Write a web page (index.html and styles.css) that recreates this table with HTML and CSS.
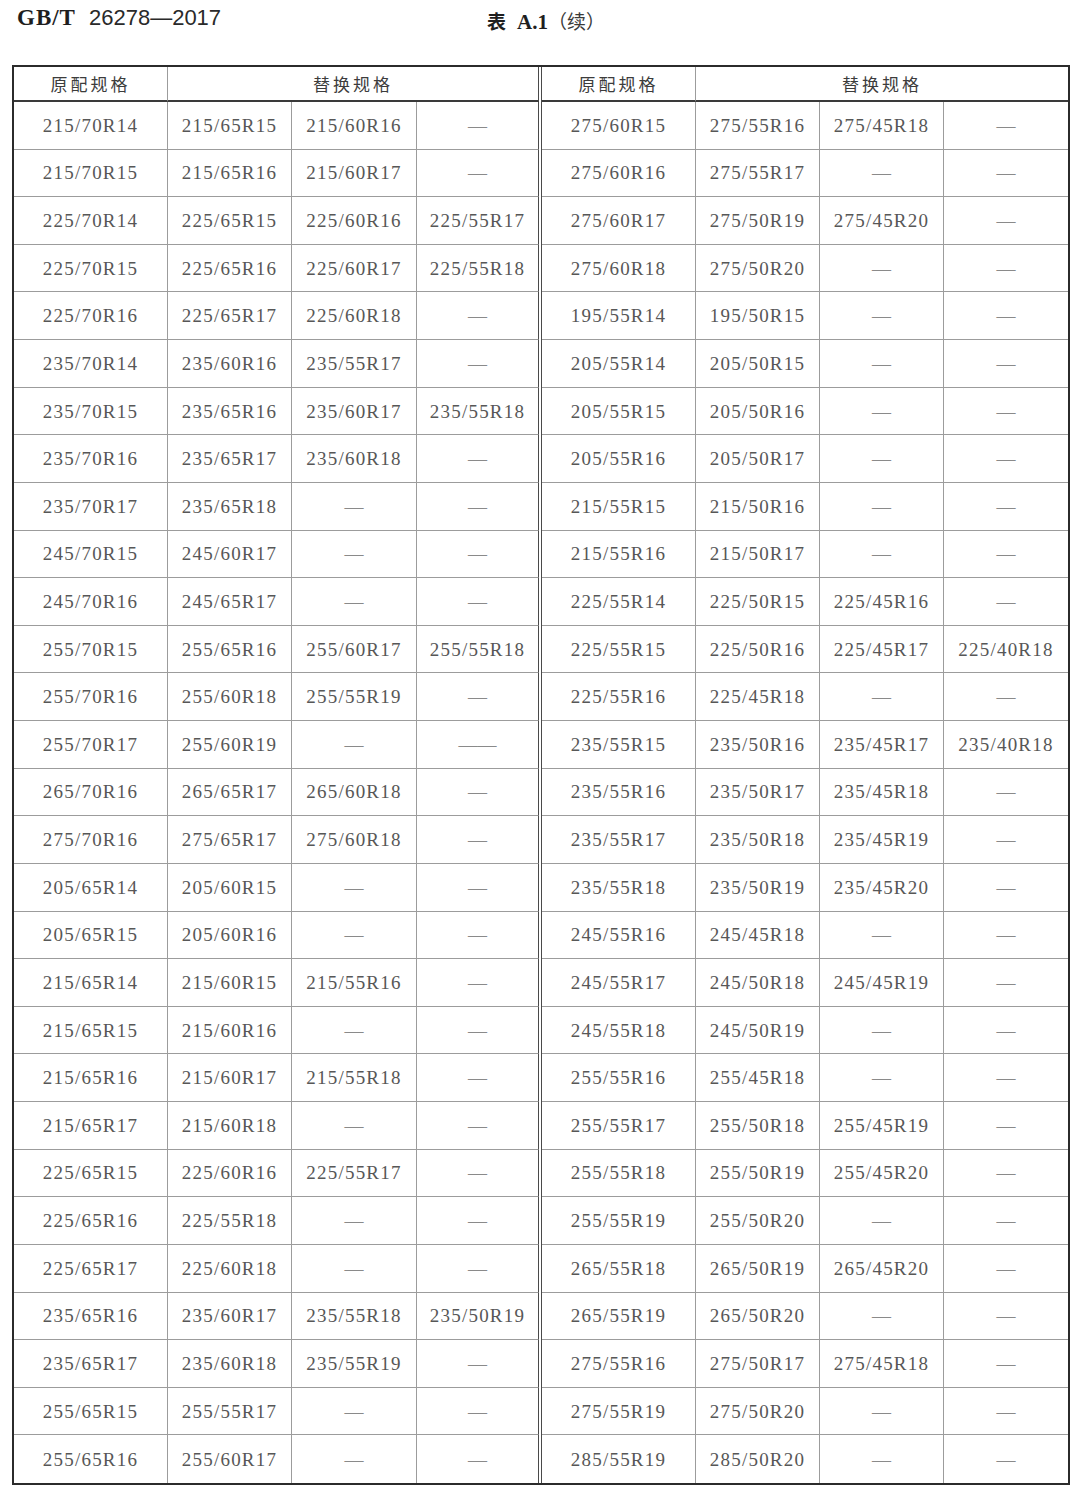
FILE: index.html
```html
<!DOCTYPE html>
<html lang="zh-CN">
<head>
<meta charset="utf-8">
<title>GB/T 26278—2017 表 A.1（续）</title>
<link rel="stylesheet" href="styles.css">
</head>
<body>
<div class="page">
  <header class="top">
    <div class="std"><span class="std-code">GB/T</span><span class="std-num">26278—2017</span></div>
    <div class="caption"><span class="cap-zh">表</span><span class="cap-no">A.1</span><span class="cap-cont">（续）</span></div>
    <div></div>
  </header>

  <div class="sheet">
    <div class="half half-left">
      <div class="hd">原配规格</div><div class="hd span3">替换规格</div>
      <div class="c">215/70R14</div><div class="c">215/65R15</div><div class="c">215/60R16</div><div class="c d">—</div>
      <div class="c">215/70R15</div><div class="c">215/65R16</div><div class="c">215/60R17</div><div class="c d">—</div>
      <div class="c">225/70R14</div><div class="c">225/65R15</div><div class="c">225/60R16</div><div class="c">225/55R17</div>
      <div class="c">225/70R15</div><div class="c">225/65R16</div><div class="c">225/60R17</div><div class="c">225/55R18</div>
      <div class="c">225/70R16</div><div class="c">225/65R17</div><div class="c">225/60R18</div><div class="c d">—</div>
      <div class="c">235/70R14</div><div class="c">235/60R16</div><div class="c">235/55R17</div><div class="c d">—</div>
      <div class="c">235/70R15</div><div class="c">235/65R16</div><div class="c">235/60R17</div><div class="c">235/55R18</div>
      <div class="c">235/70R16</div><div class="c">235/65R17</div><div class="c">235/60R18</div><div class="c d">—</div>
      <div class="c">235/70R17</div><div class="c">235/65R18</div><div class="c d">—</div><div class="c d">—</div>
      <div class="c">245/70R15</div><div class="c">245/60R17</div><div class="c d">—</div><div class="c d">—</div>
      <div class="c">245/70R16</div><div class="c">245/65R17</div><div class="c d">—</div><div class="c d">—</div>
      <div class="c">255/70R15</div><div class="c">255/65R16</div><div class="c">255/60R17</div><div class="c">255/55R18</div>
      <div class="c">255/70R16</div><div class="c">255/60R18</div><div class="c">255/55R19</div><div class="c d">—</div>
      <div class="c">255/70R17</div><div class="c">255/60R19</div><div class="c d">—</div><div class="c d">——</div>
      <div class="c">265/70R16</div><div class="c">265/65R17</div><div class="c">265/60R18</div><div class="c d">—</div>
      <div class="c">275/70R16</div><div class="c">275/65R17</div><div class="c">275/60R18</div><div class="c d">—</div>
      <div class="c">205/65R14</div><div class="c">205/60R15</div><div class="c d">—</div><div class="c d">—</div>
      <div class="c">205/65R15</div><div class="c">205/60R16</div><div class="c d">—</div><div class="c d">—</div>
      <div class="c">215/65R14</div><div class="c">215/60R15</div><div class="c">215/55R16</div><div class="c d">—</div>
      <div class="c">215/65R15</div><div class="c">215/60R16</div><div class="c d">—</div><div class="c d">—</div>
      <div class="c">215/65R16</div><div class="c">215/60R17</div><div class="c">215/55R18</div><div class="c d">—</div>
      <div class="c">215/65R17</div><div class="c">215/60R18</div><div class="c d">—</div><div class="c d">—</div>
      <div class="c">225/65R15</div><div class="c">225/60R16</div><div class="c">225/55R17</div><div class="c d">—</div>
      <div class="c">225/65R16</div><div class="c">225/55R18</div><div class="c d">—</div><div class="c d">—</div>
      <div class="c">225/65R17</div><div class="c">225/60R18</div><div class="c d">—</div><div class="c d">—</div>
      <div class="c">235/65R16</div><div class="c">235/60R17</div><div class="c">235/55R18</div><div class="c">235/50R19</div>
      <div class="c">235/65R17</div><div class="c">235/60R18</div><div class="c">235/55R19</div><div class="c d">—</div>
      <div class="c">255/65R15</div><div class="c">255/55R17</div><div class="c d">—</div><div class="c d">—</div>
      <div class="c">255/65R16</div><div class="c">255/60R17</div><div class="c d">—</div><div class="c d">—</div>
    </div>

    <div class="half half-right">
      <div class="hd">原配规格</div><div class="hd span3">替换规格</div>
      <div class="c">275/60R15</div><div class="c">275/55R16</div><div class="c">275/45R18</div><div class="c d">—</div>
      <div class="c">275/60R16</div><div class="c">275/55R17</div><div class="c d">—</div><div class="c d">—</div>
      <div class="c">275/60R17</div><div class="c">275/50R19</div><div class="c">275/45R20</div><div class="c d">—</div>
      <div class="c">275/60R18</div><div class="c">275/50R20</div><div class="c d">—</div><div class="c d">—</div>
      <div class="c">195/55R14</div><div class="c">195/50R15</div><div class="c d">—</div><div class="c d">—</div>
      <div class="c">205/55R14</div><div class="c">205/50R15</div><div class="c d">—</div><div class="c d">—</div>
      <div class="c">205/55R15</div><div class="c">205/50R16</div><div class="c d">—</div><div class="c d">—</div>
      <div class="c">205/55R16</div><div class="c">205/50R17</div><div class="c d">—</div><div class="c d">—</div>
      <div class="c">215/55R15</div><div class="c">215/50R16</div><div class="c d">—</div><div class="c d">—</div>
      <div class="c">215/55R16</div><div class="c">215/50R17</div><div class="c d">—</div><div class="c d">—</div>
      <div class="c">225/55R14</div><div class="c">225/50R15</div><div class="c">225/45R16</div><div class="c d">—</div>
      <div class="c">225/55R15</div><div class="c">225/50R16</div><div class="c">225/45R17</div><div class="c">225/40R18</div>
      <div class="c">225/55R16</div><div class="c">225/45R18</div><div class="c d">—</div><div class="c d">—</div>
      <div class="c">235/55R15</div><div class="c">235/50R16</div><div class="c">235/45R17</div><div class="c">235/40R18</div>
      <div class="c">235/55R16</div><div class="c">235/50R17</div><div class="c">235/45R18</div><div class="c d">—</div>
      <div class="c">235/55R17</div><div class="c">235/50R18</div><div class="c">235/45R19</div><div class="c d">—</div>
      <div class="c">235/55R18</div><div class="c">235/50R19</div><div class="c">235/45R20</div><div class="c d">—</div>
      <div class="c">245/55R16</div><div class="c">245/45R18</div><div class="c d">—</div><div class="c d">—</div>
      <div class="c">245/55R17</div><div class="c">245/50R18</div><div class="c">245/45R19</div><div class="c d">—</div>
      <div class="c">245/55R18</div><div class="c">245/50R19</div><div class="c d">—</div><div class="c d">—</div>
      <div class="c">255/55R16</div><div class="c">255/45R18</div><div class="c d">—</div><div class="c d">—</div>
      <div class="c">255/55R17</div><div class="c">255/50R18</div><div class="c">255/45R19</div><div class="c d">—</div>
      <div class="c">255/55R18</div><div class="c">255/50R19</div><div class="c">255/45R20</div><div class="c d">—</div>
      <div class="c">255/55R19</div><div class="c">255/50R20</div><div class="c d">—</div><div class="c d">—</div>
      <div class="c">265/55R18</div><div class="c">265/50R19</div><div class="c">265/45R20</div><div class="c d">—</div>
      <div class="c">265/55R19</div><div class="c">265/50R20</div><div class="c d">—</div><div class="c d">—</div>
      <div class="c">275/55R16</div><div class="c">275/50R17</div><div class="c">275/45R18</div><div class="c d">—</div>
      <div class="c">275/55R19</div><div class="c">275/50R20</div><div class="c d">—</div><div class="c d">—</div>
      <div class="c">285/55R19</div><div class="c">285/50R20</div><div class="c d">—</div><div class="c d">—</div>
    </div>
  </div>
</div>
</body>
</html>
```

FILE: styles.css
```css
html, body {
  margin: 0;
  padding: 0;
  background: #ffffff;
}

.page {
  width: 1080px;
  height: 1494px;
  padding: 0 0 0 12px;
  box-sizing: border-box;
}

.top {
  height: 65px;
  display: grid;
  grid-template-columns: 1fr auto 1fr;
  margin-left: -12px;
  padding-left: 12px;
}

.std {
  padding: 3px 0 0 5px;
  line-height: 30px;
  color: #1e1e1e;
  white-space: nowrap;
}

.std-code {
  font-family: "Liberation Serif", serif;
  font-weight: bold;
  font-size: 23px;
  letter-spacing: 1px;
}

.std-num {
  font-family: "Liberation Sans", sans-serif;
  font-size: 22px;
  margin-left: 13px;
  color: #2a2a2a;
}

.caption {
  padding-top: 6px;
  line-height: 30px;
  color: #1e1e1e;
  white-space: nowrap;
}

.cap-zh {
  font-family: "Noto Sans CJK SC", sans-serif;
  font-weight: bold;
  font-size: 19px;
}

.cap-no {
  font-family: "Liberation Serif", serif;
  font-weight: bold;
  font-size: 21px;
  margin-left: 11px;
}

.cap-cont {
  font-family: "Noto Sans CJK SC", sans-serif;
  font-size: 19px;
  font-weight: 400;
  color: #3a3a3a;
}

.sheet {
  display: flex;
  width: max-content;
  height: 1420px;
  box-sizing: border-box;
  border: 2px solid #2b2b2b;
}

.half {
  display: grid;
  grid-template-rows: 35px repeat(29, 1fr);
}

.half-left {
  grid-template-columns: 154px 124px 125px 122px;
}

.half-right {
  grid-template-columns: 154px 124px 124px 124px;
  margin-left: 2px;
  border-left: 1px solid #4a4a4a;
}

.c, .hd {
  display: flex;
  align-items: center;
  justify-content: center;
  border-right: 1px solid #9c9c9c;
  border-bottom: 1px solid #9c9c9c;
  box-sizing: border-box;
  min-width: 0;
}

.c {
  font-family: "Liberation Serif", serif;
  font-size: 19px;
  letter-spacing: 1.2px;
  color: #575757;
  padding-top: 1px;
}

.hd {
  font-family: "Noto Sans CJK SC", sans-serif;
  font-size: 17px;
  letter-spacing: 3px;
  color: #3c3c3c;
  border-bottom: 2px solid #3a3a3a;
  padding-bottom: 1px;
}

.span3 {
  grid-column: span 3;
}

.d {
  color: #8a8a8a;
  letter-spacing: 0;
}

/* last column of each half */
.half-right .c:nth-child(4n+2),
.half-right .hd.span3 {
  border-right: none;
}

.half-left .c:nth-child(4n+2),
.half-left .hd.span3 {
  border-right: 1px solid #4a4a4a;
}

/* last row: outer frame draws the bottom */
.half .c:nth-last-child(-n+4) {
  border-bottom: none;
}
```
